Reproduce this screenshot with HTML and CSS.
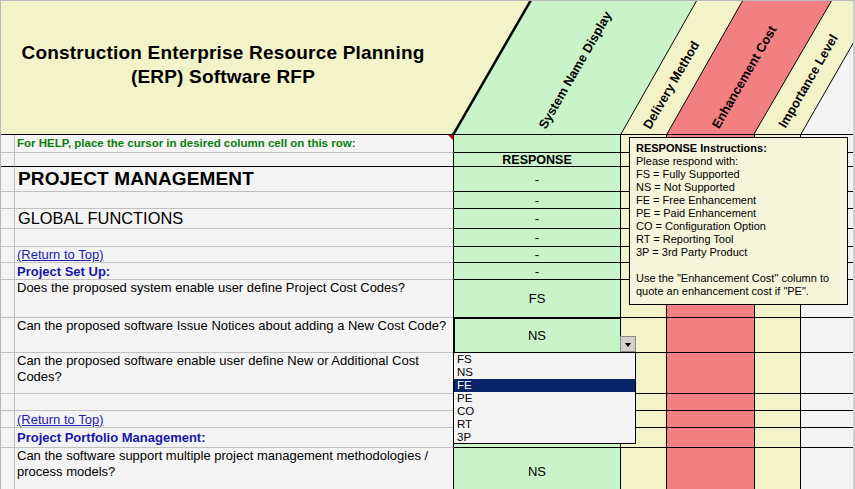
FILE: index.html
```html
<!DOCTYPE html>
<html lang="en">
<head>
    <meta charset="UTF-8">
    <title>Construction ERP Software RFP</title>
    <link rel="stylesheet" href="styles.css">
</head>
<body>

<div class="sheet">
    <div class="head">
        <svg class="headArt" width="852" height="133" viewBox="1 1 852 133">
            <rect x="0" y="0" width="860" height="140" fill="#f3f3c9"/>
            <polygon points="453,134 531,0 697,0 621,134" fill="#c9f3c9"/>
            <polygon points="667,134 743,0 832,0 754,134" fill="#f38080"/>
            <polygon points="801,134 855,40 855,134" fill="#f4f4f4"/>
            <line x1="453" y1="135" x2="531" y2="0" stroke="#000" stroke-width="2.5"/>
            <line x1="621" y1="134" x2="697" y2="0" stroke="#000" stroke-width="1"/>
            <line x1="667" y1="134" x2="743" y2="0" stroke="#000" stroke-width="1"/>
            <line x1="754" y1="134" x2="832" y2="0" stroke="#000" stroke-width="1"/>
            <line x1="801" y1="134" x2="855" y2="40" stroke="#000" stroke-width="1"/>
            <g class="colLabel">
                <text x="575" y="70" transform="rotate(-60 575 70)">System Name Display</text>
                <text x="671" y="85" transform="rotate(-60 671 85)">Delivery Method</text>
                <text x="744" y="77" transform="rotate(-60 744 77)">Enhancement Cost</text>
                <text x="808" y="81" transform="rotate(-60 808 81)">Importance Level</text>
            </g>
        </svg>
        <div class="title">Construction Enterprise Resource Planning<br>(ERP) Software RFP</div>
    </div>

    <div class="grid">
        <!-- help row -->
        <div class="hd"></div>
        <div class="q help">For HELP, place the cursor in desired column cell on this row:</div>
        <div class="resp"></div><div class="dm"></div><div class="ec"></div><div class="il"></div><div class="x"></div>

        <div class="hd k"></div>
        <div class="q k"></div>
        <div class="resp respHead">RESPONSE</div><div class="dm"></div><div class="ec"></div><div class="il"></div><div class="x"></div>

        <div class="hd"></div>
        <div class="q big">PROJECT MANAGEMENT</div>
        <div class="resp">-</div><div class="dm"></div><div class="ec"></div><div class="il"></div><div class="x"></div>

        <div class="hd"></div>
        <div class="q"></div>
        <div class="resp">-</div><div class="dm"></div><div class="ec"></div><div class="il"></div><div class="x"></div>

        <div class="hd"></div>
        <div class="q sub">GLOBAL FUNCTIONS</div>
        <div class="resp">-</div><div class="dm"></div><div class="ec"></div><div class="il"></div><div class="x"></div>

        <div class="hd"></div>
        <div class="q"></div>
        <div class="resp">-</div><div class="dm"></div><div class="ec"></div><div class="il"></div><div class="x"></div>

        <div class="hd"></div>
        <div class="q"><a class="top" href="#">(Return to Top)</a></div>
        <div class="resp">-</div><div class="dm"></div><div class="ec"></div><div class="il"></div><div class="x"></div>

        <div class="hd"></div>
        <div class="q group">Project Set Up:</div>
        <div class="resp">-</div><div class="dm"></div><div class="ec"></div><div class="il"></div><div class="x"></div>

        <div class="hd"></div>
        <div class="q qt">Does the proposed system enable user define Project Cost Codes?</div>
        <div class="resp">FS</div><div class="dm"></div><div class="ec"></div><div class="il"></div><div class="x"></div>

        <div class="hd"></div>
        <div class="q qt">Can the proposed software Issue Notices about adding a New Cost Code?</div>
        <div class="resp sel">NS</div><div class="dm"></div><div class="ec"></div><div class="il"></div><div class="x"></div>

        <div class="hd"></div>
        <div class="q qt">Can the proposed software enable user define New or Additional Cost Codes?</div>
        <div class="resp"></div><div class="dm"></div><div class="ec"></div><div class="il"></div><div class="x"></div>

        <div class="hd"></div>
        <div class="q"></div>
        <div class="resp"></div><div class="dm"></div><div class="ec"></div><div class="il"></div><div class="x"></div>

        <div class="hd"></div>
        <div class="q"><a class="top" href="#">(Return to Top)</a></div>
        <div class="resp"></div><div class="dm"></div><div class="ec"></div><div class="il"></div><div class="x"></div>

        <div class="hd"></div>
        <div class="q group">Project Portfolio Management:</div>
        <div class="resp"></div><div class="dm"></div><div class="ec"></div><div class="il"></div><div class="x"></div>

        <div class="hd"></div>
        <div class="q qt">Can the software support multiple project management methodologies / process models?</div>
        <div class="resp">NS</div><div class="dm"></div><div class="ec"></div><div class="il"></div><div class="x"></div>
    </div>

    <!-- input message of the selected column -->
    <div class="tip">
        <div class="tipTitle">RESPONSE Instructions:</div>
        <div>Please respond with:</div>
        <div>FS = Fully Supported</div>
        <div>NS = Not Supported</div>
        <div>FE = Free Enhancement</div>
        <div>PE = Paid Enhancement</div>
        <div>CO = Configuration Option</div>
        <div>RT = Reporting Tool</div>
        <div>3P = 3rd Party Product</div>
        <div class="gap"></div>
        <div>Use the "Enhancement Cost" column to</div>
        <div>quote an enhancement cost if "PE".</div>
    </div>

    <!-- validation list -->
    <div class="dropBtn"></div>
    <ul class="pick">
        <li>FS</li>
        <li>NS</li>
        <li class="on">FE</li>
        <li>PE</li>
        <li>CO</li>
        <li>RT</li>
        <li>3P</li>
    </ul>
</div>

</body>
</html>
```

FILE: styles.css
```css
*{margin: 0; padding: 0; box-sizing: border-box;}

body{
    font-family: "Liberation Sans", Arial, sans-serif;
    background: #f4f4f4;
    color: #000;
}

.sheet{
    position: relative;
    width: 855px;
    height: 489px;
    overflow: hidden;
    border-top: 1px solid #b8b8b8;
    border-left: 1px solid #b8b8b8;
    border-right: 2px solid #cfcfcf;
    background: #f4f4f4;
}

/* header */
.head{
    position: relative;
    height: 134px;
    border-bottom: 1px solid #000;
}
.headArt{
    position: absolute;
    left: 0;
    top: 0;
}
.colLabel text{
    font-family: "Liberation Sans", Arial, sans-serif;
    font-weight: bold;
    font-size: 12.8px;
    text-anchor: middle;
    dominant-baseline: central;
}
.title{
    position: relative;
    width: 452px;
    height: 133px;
    display: flex;
    align-items: center;
    justify-content: center;
    text-align: center;
    padding: 0 8px 6px 0;
    font-size: 19px;
    letter-spacing: 0.2px;
    line-height: 24px;
    font-weight: bold;
}

/* grid */
.grid{
    display: grid;
    grid-template-columns: 14px 439px 167px 46px 88px 46px 52px;
    grid-template-rows: 18px 14px 25px 17px 20px 18px 16px 17px 38px 35px 41px 17px 17px 20px 48px;
    font-size: 13px;
}
.grid > div{
    display: flex;
    align-items: center;
    overflow: hidden;
    white-space: nowrap;
}
.hd{
    border-right: 1px solid #c0c0c0;
    border-bottom: 1px solid #c0c0c0;
}
.q{
    border-right: 1px solid #000;
    border-bottom: 1px solid #c0c0c0;
    padding-left: 2px;
}
.hd.k, .q.k{ border-bottom-color: #000; }
.resp, .dm, .ec, .il, .x{ border-bottom: 1px solid #000; }
.resp, .dm, .ec, .il{ border-right: 1px solid #000; }
.resp{
    background: #c9f3c9;
    justify-content: center;
}
.dm, .il{ background: #f3f3c9; }
.ec{ background: #f38080; }

.help{
    position: relative;
    align-items: flex-start !important;
    padding-top: 2px;
    font-size: 11.5px;
    font-weight: bold;
    color: #0b7f0b;
}
.help::after{
    content: "";
    position: absolute;
    right: 0;
    top: 0;
    border-top: 5px solid #d40000;
    border-left: 5px solid transparent;
}
.respHead{
    font-weight: bold;
    font-size: 12.5px;
}
.big{
    padding-left: 3px;
    font-size: 19px;
    letter-spacing: 0.15px;
    font-weight: bold;
}
.sub{
    padding-left: 3px;
    font-size: 16.4px;
}
.top{
    color: #2020b0;
}
.group{
    font-weight: bold;
    color: #1616aa;
}
.grid > .qt{
    align-items: flex-start;
    white-space: normal;
    line-height: 16px;
}
.sel{
    outline: 2px solid #000;
    outline-offset: -1px;
}

/* input message */
.tip{
    position: absolute;
    left: 628px;
    top: 136px;
    width: 219px;
    height: 168px;
    border: 1px solid #000;
    background: #f5f5dc;
    padding: 4px 6px;
    font-size: 11px;
    line-height: 13px;
}
.tipTitle{ font-weight: bold; }
.gap{ height: 13px; }

/* dropdown */
.dropBtn{
    position: absolute;
    left: 619px;
    top: 335px;
    width: 16px;
    height: 16px;
    background: #d4d0c8;
    border: 1px solid #8a8a8a;
}
.dropBtn::after{
    content: "";
    position: absolute;
    left: 4px;
    top: 6px;
    border-top: 4px solid #000;
    border-left: 3.5px solid transparent;
    border-right: 3.5px solid transparent;
}
.pick{
    position: absolute;
    left: 452px;
    top: 351px;
    width: 183px;
    height: 92px;
    list-style: none;
    border: 1px solid #000;
    background: #f4f4f4;
    font-size: 11.5px;
    line-height: 13px;
}
.pick li{ padding-left: 3px; }
.pick .on{
    background: #0a246a;
    color: #fff;
}
```
